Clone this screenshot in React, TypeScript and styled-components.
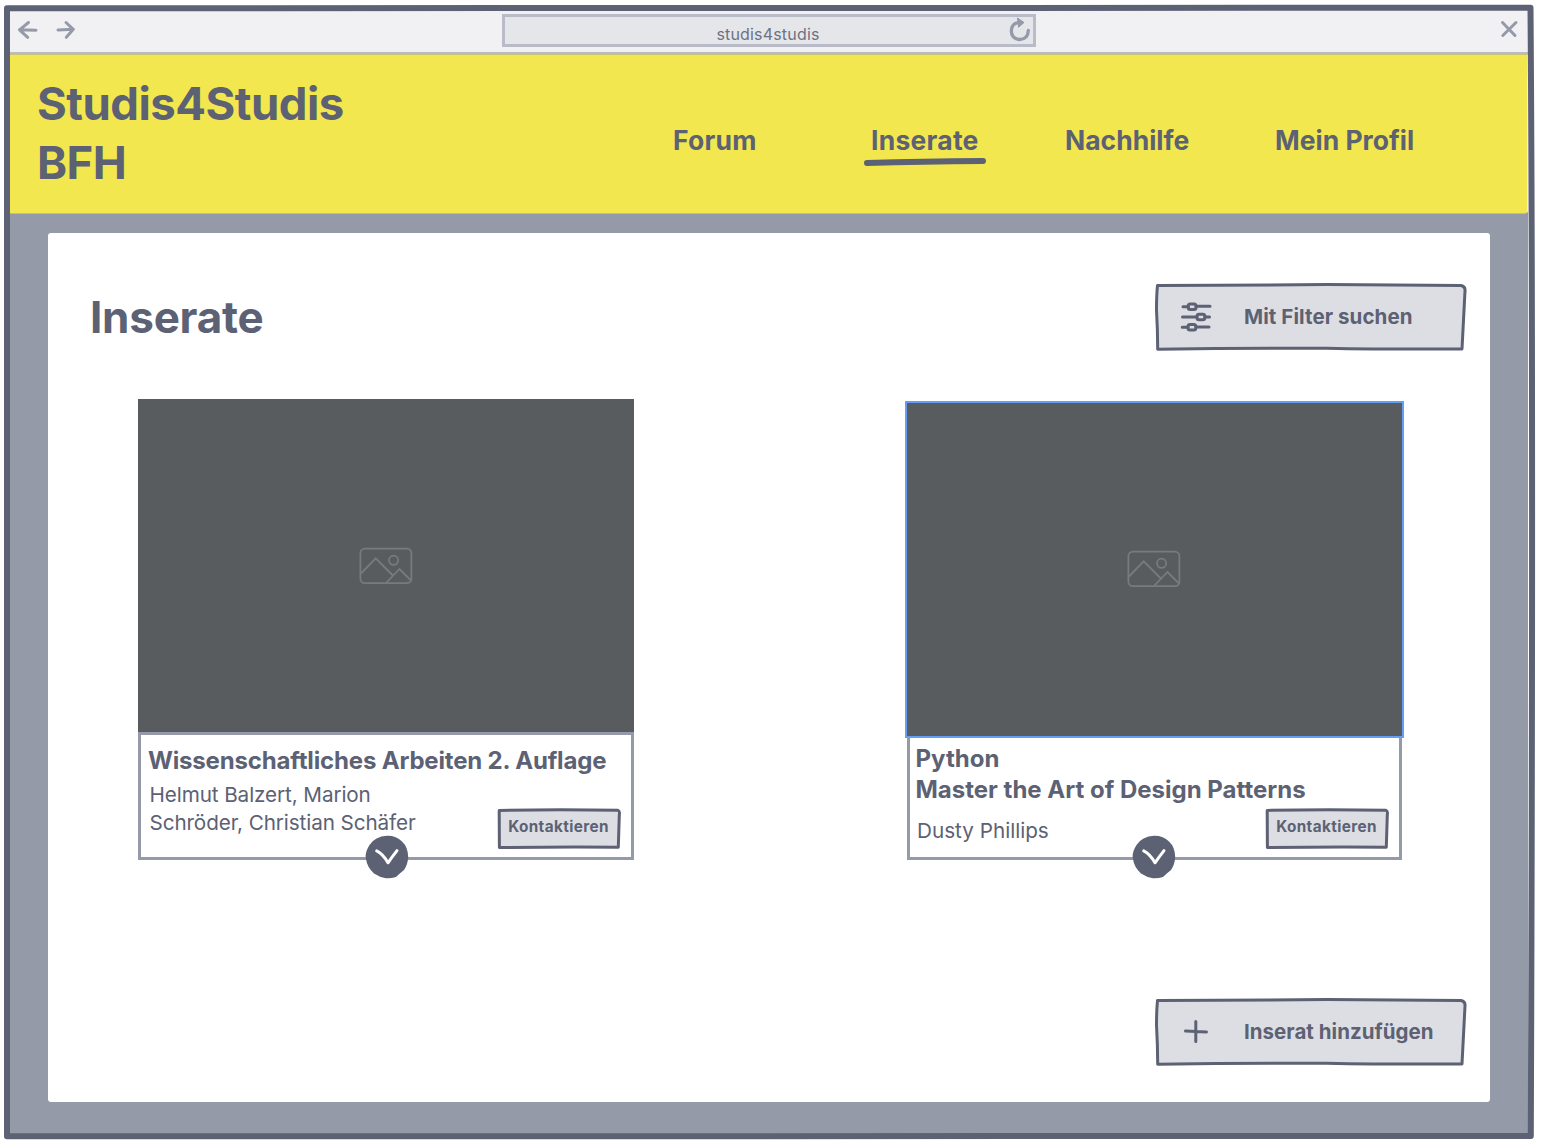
import React from "react";
import styled, { createGlobalStyle } from "styled-components";

const ink = "#5c6174";
const slate = "#959aa8";

const GlobalStyle = createGlobalStyle`
  *, *::before, *::after { box-sizing: border-box; }
  body { margin: 0; background: #fff; }
  h1, h2, h3, p { margin: 0; }
  button { border: 0; padding: 0; background: none; font: inherit; color: inherit; }
`;

const Window = styled.div`
  position: relative;
  width: 1544px;
  height: 1144px;
  padding: 10px 16px 10px 10px;
  overflow: hidden;
  color: ${ink};
  font-family: Inter, "Liberation Sans", sans-serif;
`;

const FrameOutline = styled.svg`
  position: absolute;
  inset: 0;
  pointer-events: none;
`;

const Page = styled.div`
  display: flex;
  flex-direction: column;
  height: 1124px;
  background: ${slate};
`;

const Toolbar = styled.div`
  display: flex;
  align-items: flex-start;
  flex: none;
  height: 44px;
  border-bottom: 2px solid #b9bcc0;
  background: #f1f1f4;
`;

const HistoryIcons = styled.svg`
  margin: 8px 0 0 6px;
`;

const AddressBar = styled.div`
  display: flex;
  align-items: center;
  justify-content: flex-end;
  width: 534px;
  height: 33px;
  margin: 4px 0 0 424px;
  border: 3px solid #b9bcc8;
  background: #e5e6ea;
`;

const Address = styled.span`
  flex: 1;
  padding: 6px 0 0 24px;
  text-align: center;
  font-size: 16px;
  line-height: 20px;
  letter-spacing: 0.18px;
  color: #6d7283;
`;

const CloseIcon = styled.svg`
  margin: 8px 7px 0 auto;
`;

const Header = styled.header`
  display: flex;
  flex: none;
  height: 159.5px;
  background: #f2e74f;
  border-top: 1px solid #c9c27a;
  border-right: 1.5px solid #f4f2dc;
  border-bottom: 1px solid #c9c168;
  border-bottom-right-radius: 4px;
`;

const Brand = styled.h1`
  width: 663px;
  padding: 19px 0 0 27px;
  font-size: 45.5px;
  line-height: 59px;
  font-weight: 700;
  letter-spacing: -0.5px;
`;

const Nav = styled.nav`
  display: grid;
  grid-template-columns: 198px 194px 210px auto;
  align-items: start;
  padding-top: 69px;
`;

const NavItem = styled.a<{ $track: number }>`
  position: relative;
  font-size: 26.5px;
  line-height: 32px;
  font-weight: 700;
  letter-spacing: ${(p) => p.$track}px;
  white-space: nowrap;
`;

const Underline = styled.svg`
  position: absolute;
  left: -9.5px;
  top: 30px;
`;

const Panel = styled.main`
  display: flex;
  flex-direction: column;
  width: 1442px;
  height: 868.5px;
  margin: 19.5px 0 0 38px;
  padding: 50px 23px 35.5px 42px;
  border-radius: 3px;
  background: #fff;
`;

const PanelHead = styled.div`
  display: flex;
  justify-content: space-between;
  height: 116px;
`;

const PanelTitle = styled.h2`
  padding-top: 9px;
  font-size: 44px;
  line-height: 50px;
  font-weight: 700;
  letter-spacing: -0.25px;
`;

const ActionButton = styled.button<{ $track: number }>`
  display: flex;
  align-items: center;
  position: relative;
  width: 312px;
  height: 68px;
  padding-left: 25px;
  font-size: 20.5px;
  font-weight: 700;
  letter-spacing: ${(p) => p.$track}px;
`;

const Sketch = styled.svg`
  position: absolute;
  inset: 0;
`;

const ActionIcon = styled.svg`
  position: relative;
  flex: none;
`;

const ActionLabel = styled.span`
  position: relative;
  padding: 0 0 2px 32px;
  white-space: nowrap;
`;

const Cards = styled.div`
  display: flex;
  align-items: flex-start;
  justify-content: space-between;
  flex: 1;
  padding: 0 63px 0 48px;
`;

const Card = styled.article<{ $selected?: boolean }>`
  display: flex;
  flex-direction: column;
  align-items: center;
  width: ${(p) => (p.$selected ? 499 : 496)}px;
  height: 460.5px;
  padding-top: ${(p) => (p.$selected ? 2 : 0)}px;
`;

const Photo = styled.div<{ $selected?: boolean }>`
  display: flex;
  align-items: center;
  justify-content: center;
  align-self: stretch;
  height: ${(p) => (p.$selected ? 336.5 : 333)}px;
  padding: ${(p) => (p.$selected ? "0 1px 1px 0" : "0")};
  border: ${(p) => (p.$selected ? "2px solid #649ff5" : "0")};
  background: #585c5e;
`;

const Details = styled.div<{ $selected?: boolean }>`
  position: relative;
  display: flex;
  justify-content: space-between;
  flex: 1;
  width: ${(p) => (p.$selected ? 495 : 496)}px;
  padding-left: ${(p) => (p.$selected ? 5.5 : 7)}px;
  border: 3px solid ${slate};
  border-top-width: ${(p) => (p.$selected ? 0 : 3)}px;
`;

const Copy = styled.div<{ $top: number }>`
  padding-top: ${(p) => p.$top}px;
  white-space: nowrap;
`;

const CardTitle = styled.h3<{ $track: number }>`
  font-size: 24px;
  line-height: 31px;
  font-weight: 700;
  letter-spacing: ${(p) => p.$track}px;
`;

const Author = styled.p<{ $track: number; $top: number }>`
  padding: ${(p) => p.$top}px 0 0 1.5px;
  font-size: 20.7px;
  line-height: 28px;
  letter-spacing: ${(p) => p.$track}px;
`;

const ContactButton = styled.button`
  position: absolute;
  right: 9px;
  bottom: 7px;
  width: 125px;
  height: 42px;
  font-size: 15.3px;
  font-weight: 700;
  letter-spacing: 0.38px;
`;

const ContactLabel = styled.span`
  position: relative;
  top: -2px;
  left: -1px;
`;

const Toggle = styled.button<{ $left: number }>`
  position: absolute;
  left: ${(p) => p.$left}px;
  bottom: -22px;
  width: 44px;
  height: 44px;
`;

const AddRow = styled.div`
  display: flex;
  justify-content: flex-end;
`;

function ActionShape() {
  return (
    <Sketch width="312" height="68" viewBox="0 0 312 68">
      <path
        d="M2.500 2.5 Q90 2.4 172 1.5 Q240 2.3 306 2.5 Q310.500 3.5 310 8 Q308.500 36 307 66 Q230 66.4 171 65.2 Q90 65.3 2.700 66.2 Q2.700 48 1.500 27 Q1.500 12 2.500 2.5Z"
        fill="#dddee3"
        stroke={ink}
        strokeWidth="3"
        strokeLinejoin="round"
      />
    </Sketch>
  );
}

function PhotoIcon() {
  return (
    <svg width="54" height="38" viewBox="0 0 54 38" fill="none" stroke="#777b7d" strokeWidth="1.8">
      <rect x="1.4" y="1.6" width="51" height="34.6" rx="4.5" />
      <path d="M2 26.5 16.7 11.3 34.4 29M27 36 40.5 22 52 33.5" />
      <circle cx="34.6" cy="13.3" r="4.6" />
    </svg>
  );
}

function Contact() {
  return (
    <ContactButton>
      <Sketch width="125" height="42" viewBox="0 0 125 42">
        <path
          d="M2.2 2.4 Q60 1.4 121 2.3 Q123 3 122.300 7 L121.3 39.2 Q60 38.700 2.4 39.600Z"
          fill="#dddee3"
          stroke={ink}
          strokeWidth="3"
          strokeLinejoin="round"
        />
      </Sketch>
      <ContactLabel>Kontaktieren</ContactLabel>
    </ContactButton>
  );
}

function Expand({ left }: { left: number }) {
  return (
    <Toggle $left={left} aria-label="Mehr anzeigen">
      <svg width="44" height="44" viewBox="0 0 44 44">
        <path
          d="M22 .8 Q31 .5 37 6.5 Q43 12 43.2 22 Q43 29 39 35 Q34 39 31 42 Q26 43.5 21 43.2 Q15 42.5 9 38.500 Q2 32 1 24 Q-.5 18 4.5 10 Q10 1.5 22 .8Z"
          fill={ink}
        />
        <path d="M11.7 15.8 Q18 18.8 23 27.8 Q27 22 32 15.6" fill="none" stroke="#fff" strokeWidth="3" strokeLinecap="round" strokeLinejoin="round" />
      </svg>
    </Toggle>
  );
}

export default function App() {
  return (
    <>
      <GlobalStyle />
      <Window>
        <Page>
          <Toolbar>
            <HistoryIcons width="62" height="24" viewBox="16 18 62 24" fill="none" stroke={slate} strokeWidth="3" strokeLinecap="round" strokeLinejoin="round">
              <path d="M28.5 22.5 19.5 29.8 27.7 37.3M19.5 29.8 36 30.3" />
              <path d="M66 22.5 73.3 29.3 66.3 37.3M73.3 29.3 58 30" />
            </HistoryIcons>
            <AddressBar>
              <Address>studis4studis</Address>
              <svg width="26" height="27" viewBox="1007 17 26 27">
                <path d="M1028.3 30.5 Q1028 39.3 1019.5 39.5 Q1011.5 38.5 1011.3 31 Q1011.5 23 1019.5 22.500" fill="none" stroke={slate} strokeWidth="3.3" strokeLinecap="round" />
                <path d="M1017.5 18 1024 22.5 1018.5 27.3Z" fill={slate} stroke={slate} strokeLinejoin="round" />
              </svg>
            </AddressBar>
            <CloseIcon width="24" height="24" viewBox="1497 18 24 24" stroke={slate} strokeWidth="3" strokeLinecap="round">
              <path d="M1502.500 22.5 1515 35.5M1516 22.5 1502.8 35.5" />
            </CloseIcon>
          </Toolbar>

          <Header>
            <Brand>
              Studis4Studis
              <br />
              BFH
            </Brand>
            <Nav>
              <NavItem $track={0.2}>Forum</NavItem>
              <NavItem $track={0.25}>
                Inserate
                <Underline width="126" height="14" viewBox="0 0 126 14">
                  <path d="M5 8.9 Q60 7.6 121 7" fill="none" stroke={ink} strokeWidth="6" strokeLinecap="round" />
                </Underline>
              </NavItem>
              <NavItem $track={0}>Nachhilfe</NavItem>
              <NavItem $track={0}>Mein Profil</NavItem>
            </Nav>
          </Header>

          <Panel>
            <PanelHead>
              <PanelTitle>Inserate</PanelTitle>
              <ActionButton $track={0.08}>
                <ActionShape />
                <ActionIcon width="32" height="32" viewBox="0 0 32 32" fill="none" stroke={ink} strokeWidth="3" strokeLinecap="round">
                  <path d="M3 5.8H8.5M16 5.3H30M2.5 16H17M25 16H29.5M2.200 26.2H8M16 26H29" />
                  <rect x="8.2" y="3" width="7.8" height="5.4" rx="2" />
                  <rect x="17" y="13.3" width="7.8" height="5.4" rx="2" />
                  <rect x="8" y="23.5" width="7.8" height="5.4" rx="2" />
                </ActionIcon>
                <ActionLabel>Mit Filter suchen</ActionLabel>
              </ActionButton>
            </PanelHead>

            <Cards>
              <Card>
                <Photo>
                  <PhotoIcon />
                </Photo>
                <Details>
                  <Copy $top={10}>
                    <CardTitle $track={-0.17}>Wissenschaftliches Arbeiten 2. Auflage</CardTitle>
                    <Author $top={4.5} $track={-0.1}>
                      Helmut Balzert, Marion
                      <br />
                      Schröder, Christian Schäfer
                    </Author>
                  </Copy>
                  <Contact />
                  <Expand left={224} />
                </Details>
              </Card>
              <Card $selected>
                <Photo $selected>
                  <PhotoIcon />
                </Photo>
                <Details $selected>
                  <Copy $top={5}>
                    <CardTitle $track={0}>
                      Python
                      <br />
                      Master the Art of Design Patterns
                    </CardTitle>
                    <Author $top={12} $track={0}>Dusty Phillips</Author>
                  </Copy>
                  <Contact />
                  <Expand left={222} />
                </Details>
              </Card>
            </Cards>

            <AddRow>
              <ActionButton $track={0.03}>
                <ActionShape />
                <ActionIcon width="32" height="32" viewBox="0 0 32 32" fill="none" stroke={ink} strokeWidth="3" strokeLinecap="round">
                  <path d="M15.8 5.5V25.5M5.5 15 26.5 16" />
                </ActionIcon>
                <ActionLabel>Inserat hinzufügen</ActionLabel>
              </ActionButton>
            </AddRow>
          </Panel>
        </Page>
        <FrameOutline width="1544" height="1144" viewBox="0 0 1544 1144">
          <path
            d="M7 8.2 Q770 6.3 1530.5 7.8 Q1533.500 400 1530.8 1136 Q770 1137 7 1136.3 Q5.500 500 7 8.2Z"
            fill="none"
            stroke={ink}
            strokeWidth="6"
            strokeLinejoin="round"
          />
        </FrameOutline>
      </Window>
    </>
  );
}
